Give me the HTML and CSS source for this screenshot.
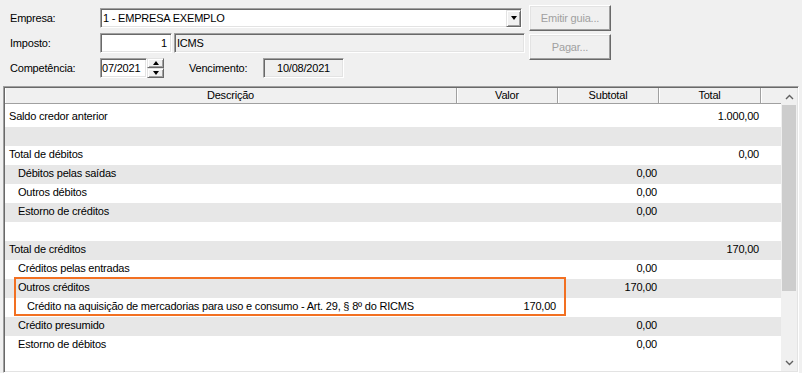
FILE: index.html
```html
<!DOCTYPE html>
<html lang="pt-BR">
<head>
<meta charset="utf-8">
<title>Apuração</title>
<link rel="stylesheet" href="styles.css">
</head>
<body>
<div class="top">
  <div class="form">
    <div class="row r1">
      <span class="lbl">Empresa:</span>
      <div class="combo sunken">
        <span class="combo-text">1 - EMPRESA EXEMPLO</span>
        <div class="ddbtn raised"><i class="tri tri-down"></i></div>
      </div>
    </div>
    <div class="row r2">
      <span class="lbl">Imposto:</span>
      <div class="field sunken num">1</div>
      <div class="field sunken dis icms">ICMS</div>
    </div>
    <div class="row r3">
      <span class="lbl">Competência:</span>
      <div class="field sunken comp">07/2021</div>
      <div class="spin">
        <div class="sbtn raised"><i class="tri tri-up"></i></div>
        <div class="sbtn raised"><i class="tri tri-down"></i></div>
      </div>
      <span class="lbl venc-lbl">Vencimento:</span>
      <div class="field sunken dis venc">10/08/2021</div>
    </div>
  </div>
  <div class="buttons">
    <button class="btn" disabled>Emitir guia...</button>
    <button class="btn" disabled>Pagar...</button>
  </div>
</div>

<div class="grid">
  <div class="table">
    <div class="thead">
      <div class="hc c-desc">Descrição</div>
      <div class="hc c-val">Valor</div>
      <div class="hc c-sub">Subtotal</div>
      <div class="hc c-tot">Total</div>
      <div class="hc c-ext"></div>
    </div>
    <div class="tbody">
      <div class="tr"><div class="td c-desc">Saldo credor anterior</div><div class="td c-val"></div><div class="td c-sub"></div><div class="td c-tot">1.000,00</div></div>
      <div class="tr alt"><div class="td c-desc"></div></div>
      <div class="tr"><div class="td c-desc">Total de débitos</div><div class="td c-val"></div><div class="td c-sub"></div><div class="td c-tot">0,00</div></div>
      <div class="tr alt"><div class="td c-desc i1">Débitos pelas saídas</div><div class="td c-val"></div><div class="td c-sub">0,00</div></div>
      <div class="tr"><div class="td c-desc i1">Outros débitos</div><div class="td c-val"></div><div class="td c-sub">0,00</div></div>
      <div class="tr alt"><div class="td c-desc i1">Estorno de créditos</div><div class="td c-val"></div><div class="td c-sub">0,00</div></div>
      <div class="tr"><div class="td c-desc"></div></div>
      <div class="tr alt"><div class="td c-desc">Total de créditos</div><div class="td c-val"></div><div class="td c-sub"></div><div class="td c-tot">170,00</div></div>
      <div class="tr"><div class="td c-desc i1">Créditos pelas entradas</div><div class="td c-val"></div><div class="td c-sub">0,00</div></div>
      <div class="tr alt"><div class="td c-desc i1">Outros créditos</div><div class="td c-val"></div><div class="td c-sub">170,00</div></div>
      <div class="tr"><div class="td c-desc i2">Crédito na aquisição de mercadorias para uso e consumo - Art. 29, § 8º do RICMS</div><div class="td c-val">170,00</div></div>
      <div class="tr alt"><div class="td c-desc i1">Crédito presumido</div><div class="td c-val"></div><div class="td c-sub">0,00</div></div>
      <div class="tr"><div class="td c-desc i1">Estorno de débitos</div><div class="td c-val"></div><div class="td c-sub">0,00</div></div>
      <div class="highlight"></div>
    </div>
  </div>
  <div class="vscroll">
    <div class="sarrow">
      <svg width="9" height="6" viewBox="0 0 9 6"><polyline points="1,5 4.5,1.5 8,5" fill="none" stroke="#606060" stroke-width="1.4"/></svg>
    </div>
    <div class="thumb"></div>
    <div class="strack"></div>
    <div class="sarrow">
      <svg width="9" height="6" viewBox="0 0 9 6"><polyline points="1,1 4.5,4.5 8,1" fill="none" stroke="#606060" stroke-width="1.4"/></svg>
    </div>
  </div>
</div>
</body>
</html>
```

FILE: styles.css
```css
html, body {
  margin: 0;
  padding: 0;
}
body {
  width: 802px;
  height: 373px;
  overflow: hidden;
  background: #f0f0f0;
  color: #000;
  font-family: "Liberation Sans", Arial, sans-serif;
  font-size: 11px;
  line-height: 13px;
  letter-spacing: -0.2px;
}

/* 3D borders */
.sunken {
  box-sizing: border-box;
  border: 1px solid;
  border-color: #a0a0a0 #ffffff #ffffff #a0a0a0;
  box-shadow: inset 1px 1px 0 #696969, inset -1px -1px 0 #e3e3e3;
}
.raised {
  box-sizing: border-box;
  background: #f0f0f0;
  border: 1px solid;
  border-color: #e3e3e3 #696969 #696969 #e3e3e3;
  box-shadow: inset 1px 1px 0 #ffffff, inset -1px -1px 0 #a0a0a0;
}

/* top form */
.top {
  display: flex;
  height: 86px;
}
.form {
  margin-left: 10px;
  width: 515px;
  display: flex;
  flex-direction: column;
}
.row {
  display: flex;
  align-items: center;
}
.r1 { margin-top: 8px; height: 20px; }
.r2 { margin-top: 5px; height: 20px; }
.r3 { margin-top: 5px; height: 20px; }

.lbl {
  width: 90px;
  flex: none;
}
.combo {
  width: 422px;
  height: 20px;
  background: #fff;
  display: flex;
  align-items: center;
  padding-left: 2px;
}
.combo-text {
  flex: 1;
}
.ddbtn {
  width: 15px;
  height: 17px;
  display: flex;
  align-items: center;
  justify-content: center;
}
.tri {
  display: block;
  width: 0;
  height: 0;
  border-left: 3.5px solid transparent;
  border-right: 3.5px solid transparent;
}
.tri-down { border-top: 4px solid #000; }
.tri-up { border-bottom: 4px solid #000; }

.field {
  height: 20px;
  display: flex;
  align-items: center;
  background: #fff;
}
.field.dis { background: #f0f0f0; }
.num {
  width: 72px;
  justify-content: flex-end;
  padding-right: 4px;
}
.icms {
  width: 351px;
  margin-left: 2px;
  padding-left: 2px;
}
.comp {
  width: 47px;
  padding-left: 1px;
}
.spin {
  width: 17px;
  height: 20px;
  display: flex;
  flex-direction: column;
}
.sbtn {
  flex: 1;
  display: flex;
  align-items: center;
  justify-content: center;
}
.venc-lbl {
  width: 74px;
  margin-left: 25px;
}
.venc {
  width: 81px;
  justify-content: center;
}

.buttons {
  margin-left: 4px;
  margin-top: 5px;
  display: flex;
  flex-direction: column;
  gap: 3px;
}
.btn {
  width: 82px;
  height: 26px;
  margin: 0;
  padding: 0;
  font: inherit;
  letter-spacing: inherit;
  color: #a0a0a0;
  background: #f0f0f0;
  box-sizing: border-box;
  border: 1px solid;
  border-color: #ffffff #696969 #696969 #ffffff;
  box-shadow: inset -1px -1px 0 #a0a0a0, inset 1px 1px 0 #e3e3e3;
}

/* grid */
.grid {
  margin-left: 3px;
  width: 796px;
  height: 287px;
  box-sizing: border-box;
  border: 1px solid;
  border-color: #a0a0a0 #ffffff #ffffff #a0a0a0;
  box-shadow: inset 1px 1px 0 #696969, inset -1px -1px 0 #e3e3e3;
  padding: 1px;
  display: flex;
  background: #fff;
  overflow: hidden;
}
.table {
  width: 776px;
  display: flex;
  flex-direction: column;
}
.thead {
  display: flex;
  height: 16px;
  background: #f0f0f0;
  box-sizing: border-box;
  border-bottom: 1px solid #a0a0a0;
}
.hc {
  box-sizing: border-box;
  text-align: center;
  line-height: 15px;
  border-right: 1px solid #a0a0a0;
  box-shadow: inset 1px 0 0 #ffffff;
}
.c-desc { width: 452px; flex: none; }
.c-val { width: 101px; flex: none; }
.c-sub { width: 101px; flex: none; }
.c-tot { width: 102px; flex: none; }
.c-ext { width: 20px; flex: none; border-right: 0; }

.tbody {
  position: relative;
  padding-top: 4px;
  flex: 1;
}
.tr {
  display: flex;
  height: 19px;
  box-sizing: border-box;
  padding-bottom: 3px;
  align-items: center;
}
.tr.alt { background: #e7e7e7; }
.td {
  box-sizing: border-box;
  white-space: nowrap;
}
.td.c-desc { padding-left: 4px; }
.td.c-desc.i1 { padding-left: 13px; }
.td.c-desc.i2 { padding-left: 22px; }
.td.c-val, .td.c-sub, .td.c-tot {
  text-align: right;
  padding-right: 2px;
}

.highlight {
  position: absolute;
  left: 9px;
  top: 173px;
  width: 552px;
  height: 39px;
  box-sizing: border-box;
  border: 2px solid #f27022;
}

.vscroll {
  width: 16px;
  background: #f0f0f0;
  display: flex;
  flex-direction: column;
}
.sarrow {
  height: 17px;
  flex: none;
  display: flex;
  align-items: center;
  justify-content: center;
}
.thumb {
  height: 186px;
  margin-left: 1px;
  width: 14px;
  background: #cdcdcd;
  flex: none;
}
.strack { flex: 1; }
```
